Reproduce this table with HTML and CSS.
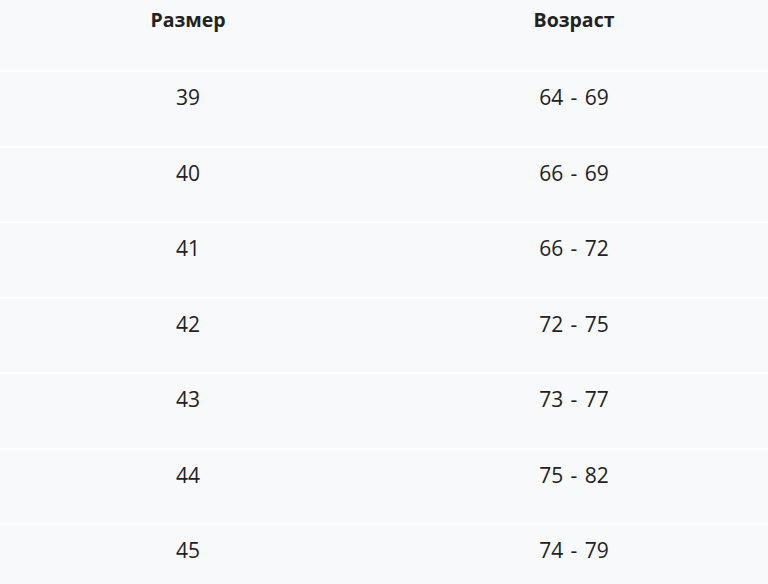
FILE: index.html
```html
<!DOCTYPE html>
<html lang="ru">
<head>
<meta charset="utf-8">
<link rel="stylesheet" href="styles.css">
</head>
<body>
<table class="sizes">
  <thead>
    <tr><th class="c1">Размер</th><th class="c2">Возраст</th></tr>
  </thead>
  <tbody>
    <tr><td class="c1">39</td><td class="c2">64 - 69</td></tr>
    <tr><td class="c1">40</td><td class="c2">66 - 69</td></tr>
    <tr><td class="c1">41</td><td class="c2">66 - 72</td></tr>
    <tr><td class="c1">42</td><td class="c2">72 - 75</td></tr>
    <tr><td class="c1">43</td><td class="c2">73 - 77</td></tr>
    <tr><td class="c1">44</td><td class="c2">75 - 82</td></tr>
    <tr><td class="c1">45</td><td class="c2">74 - 79</td></tr>
  </tbody>
</table>
</body>
</html>
```
FILE: styles.css
```css
html, body {
  margin: 0;
  padding: 0;
  background: #f8f9fb;
}
body {
  font-family: "Open Sans", "Noto Sans", sans-serif;
  color: #222;
  overflow: hidden;
}
.sizes {
  width: 768px;
  border-collapse: collapse;
  table-layout: fixed;
}
.c1 { width: 376px; }
.c2 { width: 392px; padding-left: 2px !important; }
.sizes th {
  font-weight: 700;
  font-size: 19.5px;
  line-height: 30px;
  padding: 5px 0 35px;
  text-align: center;
}
.sizes td {
  font-size: 21px;
  line-height: 30px;
  padding: 10px 0 33.5px;
  text-align: center;
  border-top: 2px solid #ffffff;
  word-spacing: 2px;
}
```
